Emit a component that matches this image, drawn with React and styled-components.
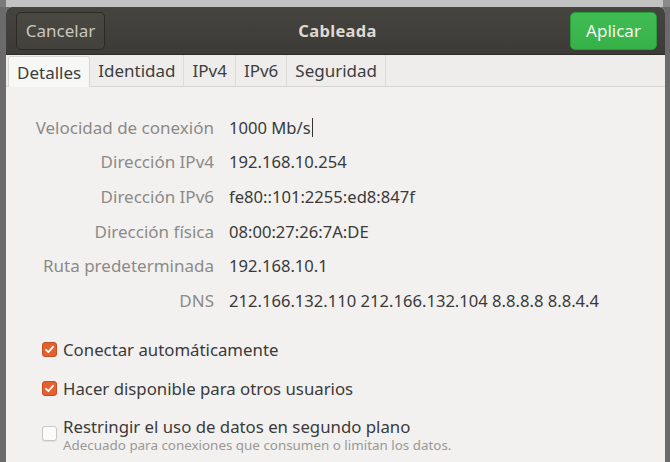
import React from "react";
import styled, { createGlobalStyle } from "styled-components";

const GlobalStyle = createGlobalStyle`
  html, body {
    margin: 0;
    padding: 0;
    background: #6b6b6b;
  }
  * {
    box-sizing: border-box;
  }
`;

const Screen = styled.div`
  width: 670px;
  height: 462px;
  display: flex;
  flex-direction: column;
  overflow: hidden;
  background: #6b6b6b;
  font-family: "Noto Sans", "Open Sans", sans-serif;
`;

const TopStrip = styled.div`
  height: 7px;
  flex-shrink: 0;
  background: linear-gradient(to right, #7a7a7a 0 6px, #c2c2c2 6px 663px, #8a8a8a 663px);
`;

const Middle = styled.div`
  flex: 1;
  display: flex;
  padding-left: 6px;
  padding-right: 5px;
`;

const Dialog = styled.div`
  flex: 1;
  display: flex;
  flex-direction: column;
  background: #f2f1f0;
  border-radius: 6px 6px 0 0;
  overflow: hidden;
`;

const HeaderBar = styled.div`
  height: 48px;
  flex-shrink: 0;
  display: flex;
  align-items: center;
  justify-content: space-between;
  padding: 0 8px 0 10px;
  background: linear-gradient(to bottom, #46443f, #3c3b37);
  border-bottom: 1px solid #2d2c29;
`;

const HeaderButton = styled.button`
  height: 38px;
  width: ${(p) => p.$width}px;
  border-radius: 5px;
  font-family: inherit;
  font-size: 17px;
  padding: 0;
  border: 1px solid ${(p) => (p.$primary ? "#2a9a3a" : "#2b2a27")};
  background: ${(p) =>
    p.$primary
      ? "linear-gradient(to bottom, #40bd52, #36b148)"
      : "linear-gradient(to bottom, #4a4843, #43413c)"};
  color: ${(p) => (p.$primary ? "#f4f8f4" : "#c9c6bf")};
`;

const Title = styled.div`
  font-weight: 700;
  font-size: 16.5px;
  color: #dedad1;
  letter-spacing: 0.3px;
`;

const TabRow = styled.div`
  height: 32px;
  flex-shrink: 0;
  display: flex;
  align-items: stretch;
  padding-left: 2px;
  background: #eeedeb;
  border-bottom: 1px solid #d7d6d3;
`;

const Tab = styled.div`
  display: flex;
  align-items: center;
  padding: 0 ${(p) => p.$pad}px;
  font-size: 17px;
  color: #3d3d3d;
  border-right: 1px solid #dedcda;
  background: ${(p) => (p.$active ? "#f7f7f6" : "transparent")};
  ${(p) =>
    p.$active &&
    `
    border: 1px solid #d7d6d3;
    border-bottom: none;
    border-radius: 3px 3px 0 0;
    margin-top: 1px;
    margin-bottom: -1px;
  `}
`;

const Content = styled.div`
  flex: 1;
  padding-top: 23px;
  display: flex;
  flex-direction: column;
`;

const InfoGrid = styled.div`
  display: grid;
  grid-template-columns: 208px auto;
  grid-auto-rows: 34.6px;
  column-gap: 15px;
  align-items: center;
`;

const Label = styled.div`
  text-align: right;
  font-size: 17px;
  color: #8c8a87;
  white-space: nowrap;
`;

const Value = styled.div`
  font-size: 16.6px;
  color: #3a3a3a;
  white-space: nowrap;
  display: flex;
  align-items: center;
`;

const Caret = styled.span`
  display: inline-block;
  width: 1px;
  height: 19px;
  margin-left: 1px;
  background: #333;
`;

const Options = styled.div`
  display: flex;
  flex-direction: column;
  padding-left: 36px;
  margin-top: 22px;
`;

const Option = styled.label`
  display: flex;
  align-items: ${(p) => (p.$sub ? "flex-start" : "center")};
  gap: 6px;
  margin-bottom: ${(p) => p.$gap}px;
`;

const Box = styled.span`
  width: 15px;
  height: 15px;
  flex-shrink: 0;
  border-radius: 3px;
  display: flex;
  align-items: center;
  justify-content: center;
  margin-top: ${(p) => (p.$sub ? "9.5px" : "0")};
  background: ${(p) => (p.$checked ? "#e4602f" : "#fbfbfb")};
  border: 1px solid ${(p) => (p.$checked ? "#c44f24" : "#c9c7c4")};
  box-shadow: ${(p) => (p.$checked ? "none" : "0 1px 1px rgba(0,0,0,0.08)")};
`;

const OptionText = styled.div`
  display: flex;
  flex-direction: column;
`;

const OptionLabel = styled.span`
  font-size: 16.8px;
  color: #3a3a3a;
  line-height: 20px;
  white-space: nowrap;
`;

const OptionHint = styled.span`
  font-size: 13.4px;
  color: #9a9895;
  line-height: 15px;
  margin-top: 1px;
  white-space: nowrap;
`;

const Check = () => (
  <svg width="11" height="11" viewBox="0 0 11 11">
    <path
      d="M2 5.8 L4.4 8.2 L9 2.8"
      fill="none"
      stroke="#fff"
      strokeWidth="1.8"
      strokeLinecap="round"
      strokeLinejoin="round"
    />
  </svg>
);

const rows = [
  ["Velocidad de conexión", "1000 Mb/s", true],
  ["Dirección IPv4", "192.168.10.254"],
  ["Dirección IPv6", "fe80::101:2255:ed8:847f"],
  ["Dirección física", "08:00:27:26:7A:DE"],
  ["Ruta predeterminada", "192.168.10.1"],
  ["DNS", "212.166.132.110 212.166.132.104 8.8.8.8 8.8.4.4"],
];

const tabs = [
  ["Detalles", 8, true],
  ["Identidad", 8],
  ["IPv4", 8],
  ["IPv6", 8],
  ["Seguridad", 8],
];

export default function App() {
  return (
    <>
      <GlobalStyle />
      <Screen>
        <TopStrip />
        <Middle>
          <Dialog>
            <HeaderBar>
              <HeaderButton $width={89}>Cancelar</HeaderButton>
              <Title>Cableada</Title>
              <HeaderButton $width={87} $primary>
                Aplicar
              </HeaderButton>
            </HeaderBar>
            <TabRow>
              {tabs.map(([name, pad, active]) => (
                <Tab key={name} $pad={pad} $active={active}>
                  {name}
                </Tab>
              ))}
            </TabRow>
            <Content>
              <InfoGrid>
                {rows.map(([label, value, caret]) => (
                  <React.Fragment key={label}>
                    <Label>{label}</Label>
                    <Value>
                      {value}
                      {caret && <Caret />}
                    </Value>
                  </React.Fragment>
                ))}
              </InfoGrid>
              <Options>
                <Option $gap={19}>
                  <Box $checked>
                    <Check />
                  </Box>
                  <OptionLabel>Conectar automáticamente</OptionLabel>
                </Option>
                <Option $gap={18}>
                  <Box $checked>
                    <Check />
                  </Box>
                  <OptionLabel>Hacer disponible para otros usuarios</OptionLabel>
                </Option>
                <Option $sub $gap={0}>
                  <Box $sub />
                  <OptionText>
                    <OptionLabel>Restringir el uso de datos en segundo plano</OptionLabel>
                    <OptionHint>
                      Adecuado para conexiones que consumen o limitan los datos.
                    </OptionHint>
                  </OptionText>
                </Option>
              </Options>
            </Content>
          </Dialog>
        </Middle>
      </Screen>
    </>
  );
}
